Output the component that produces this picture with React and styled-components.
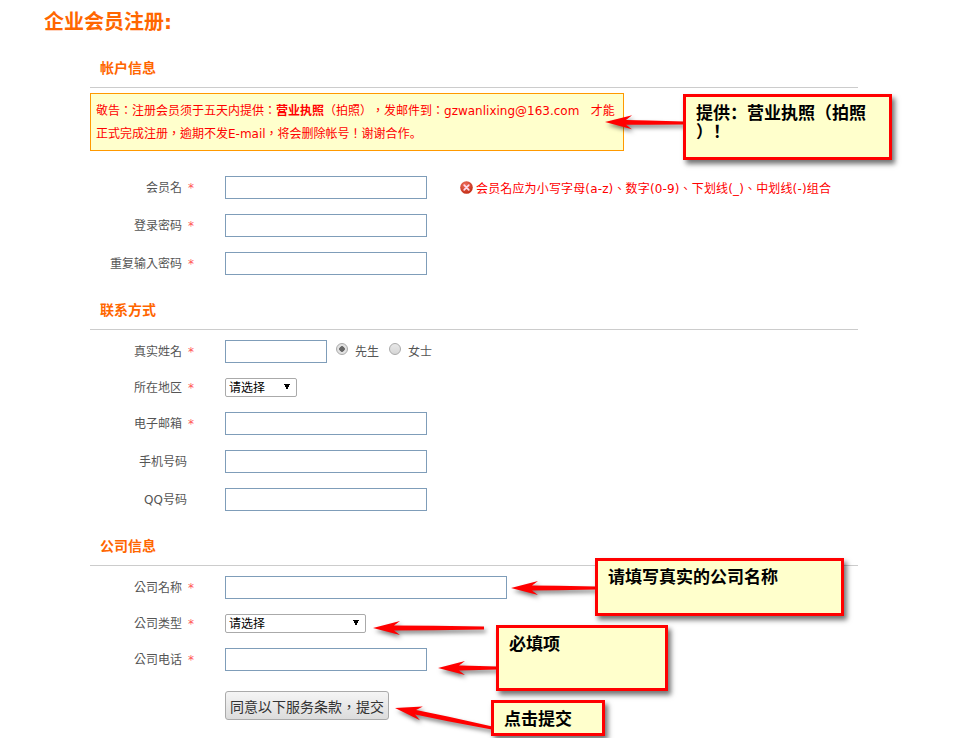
import React from "react";
import styled, { createGlobalStyle } from "styled-components";

const Global = createGlobalStyle`
  html, body { margin: 0; padding: 0; background: #fff; }
  body {
    font-family: "DejaVu Sans", "Noto Sans CJK TC", sans-serif;
    font-size: 12px;
    color: #555;
    text-spacing-trim: space-all;
  }
`;

const Page = styled.div`
  position: relative;
  width: 960px;
  height: 738px;
  overflow: hidden;
`;
const Title = styled.h1`
  margin: 0;
  padding-left: 44px;
  height: 44px;
  line-height: 44px;
  font-size: 20px;
  font-weight: 700;
  color: #f60;
  font-family: "DejaVu Sans", "Noto Sans CJK SC", sans-serif;
`;
const Form = styled.form`
  margin: 0 0 0 90px;
  width: 768px;
`;
const SectionHead = styled.h2`
  margin: ${(p) => (p.$first ? "5px" : "16px")} 0 0;
  height: 38px;
  line-height: 39px;
  padding-left: 10px;
  font-size: 14px;
  font-weight: 700;
  color: #f60;
  border-bottom: 1px solid #ccc;
  font-family: "Liberation Sans", "Noto Sans CJK SC", sans-serif;
`;
const Notice = styled.div`
  box-sizing: border-box;
  margin-top: 5px;
  width: 534px;
  height: 58px;
  padding: 6px 5px;
  border: 1px solid #f90;
  background: #ffc;
  color: #f00;
  line-height: 22px;
`;
const NoticeLine = styled.div`
  white-space: nowrap;
`;
const Strong = styled.b`
  font-family: "Liberation Sans", "Noto Sans CJK SC", sans-serif;
`;
const Stop = styled.span`
  font-family: "Noto Sans CJK SC", sans-serif;
`;
const Rows = styled.div`
  display: flex;
  flex-direction: column;
  gap: 15px;
  margin-top: ${(p) => p.$top}px;
`;
const Row = styled.div`
  display: flex;
  align-items: center;
`;
const Label = styled.label`
  box-sizing: border-box;
  flex: none;
  display: flex;
  justify-content: flex-end;
  width: 135px;
  padding-right: ${(p) => (p.$required ? 31 : 38)}px;
  line-height: 16px;
`;
const Star = styled.span`
  width: 12px;
  text-align: right;
  color: #f55;
`;
const TextInput = styled.input`
  box-sizing: border-box;
  width: ${(p) => p.$w}px;
  height: 23px;
  padding: 0 4px;
  border: 1px solid #7f9db9;
  background: #fff;
  outline: none;
`;
const Select = styled.select`
  appearance: none;
  box-sizing: border-box;
  width: ${(p) => p.$w}px;
  height: 19px;
  padding: 0 0 0 3px;
  border: 1px solid #aaa;
  border-radius: 2px;
  color: #000;
  font: 12px "DejaVu Sans", "Noto Sans CJK SC", sans-serif;
  background-color: #fff;
  background-image:
    linear-gradient(to top right, transparent 50%, #000 50%),
    linear-gradient(to top left, transparent 50%, #000 50%);
  background-size: 3px 6px, 3px 6px;
  background-position: right 9px top 5px, right 6px top 5px;
  background-repeat: no-repeat;
`;
const Radio = styled.input`
  appearance: none;
  box-sizing: border-box;
  flex: none;
  width: 12px;
  height: 12px;
  margin: 0 7px 5px ${(p) => p.$left}px;
  border: 1px solid #aaa;
  border-radius: 50%;
  background: ${(p) =>
    p.$on
      ? "radial-gradient(circle, #666 0 2.5px, #e2e2e2 3px)"
      : "linear-gradient(#e8e8e8, #d6d6d6)"};
`;
const RadioText = styled.span`
  line-height: 16px;
`;
const ErrorMsg = styled.div`
  display: flex;
  align-items: center;
  gap: 3px;
  margin-left: 33px;
  color: #f00;
  letter-spacing: 0.15px;
`;
const Submit = styled.button`
  box-sizing: border-box;
  width: 164px;
  height: 29px;
  margin: 5px 0 0 135px;
  padding: 0;
  border: 1px solid #aaa;
  border-radius: 3px;
  background: linear-gradient(#f5f5f5, #dcdcdc);
  color: #333;
  font: 14px "DejaVu Sans", "Noto Sans CJK TC", sans-serif;
`;
const Callout = styled.div`
  position: absolute;
  box-sizing: border-box;
  left: ${(p) => p.$x}px;
  top: ${(p) => p.$y}px;
  width: ${(p) => p.$w}px;
  height: ${(p) => p.$h}px;
  padding: 5px 10px;
  border: 3px solid #f00;
  background: #ffc;
  box-shadow: 3px 4px 5px rgba(0, 0, 0, 0.55);
  color: #000;
  font: 700 17px/19px "Noto Sans CJK SC", sans-serif;
  white-space: nowrap;
`;
const ArrowLayer = styled.svg`
  position: absolute;
  left: 0;
  top: 0;
  filter: drop-shadow(2px 3px 2px rgba(0, 0, 0, 0.5));
  pointer-events: none;
`;

function arrowPoints([tx, ty, ax, ay]) {
  const dx = ax - tx;
  const dy = ay - ty;
  const len = Math.hypot(dx, dy);
  const ux = dx / len;
  const uy = dy / len;
  const at = (along, side) =>
    `${(tx + ux * along - uy * side).toFixed(1)},${(ty + uy * along + ux * side).toFixed(1)}`;
  return [
    at(0, 0), at(27, -7), at(21, -2.4), at(len * 0.55, -2.2), at(len, -1.4),
    at(len, 1.4), at(len * 0.55, 2.2), at(21, 2.4), at(27, 7),
  ].join(" ");
}

const arrows = [
  [605, 122, 684, 123],
  [511, 588, 596, 588],
  [373, 628, 484, 628],
  [438, 668, 497, 668],
  [395, 708, 492, 728],
];

function ErrorIcon() {
  return (
    <svg width="13" height="13" viewBox="0 0 13 13">
      <defs>
        <radialGradient id="err" cx="40%" cy="30%" r="75%">
          <stop offset="0" stopColor="#ee7060" />
          <stop offset="1" stopColor="#c0280f" />
        </radialGradient>
      </defs>
      <circle cx="6.5" cy="6.5" r="6.3" fill="url(#err)" />
      <path d="M4.2 4.2l4.6 4.6M8.8 4.2l-4.6 4.6" stroke="#fde" strokeWidth="1.7" strokeLinecap="round" />
    </svg>
  );
}

function Field({ label, required, children }) {
  return (
    <Row>
      <Label $required={required}>
        {label}
        {required && <Star>*</Star>}
      </Label>
      {children}
    </Row>
  );
}

export default function App() {
  return (
    <Page>
      <Global />
      <Title>企业会员注册:</Title>
      <Form onSubmit={(e) => e.preventDefault()}>
        <SectionHead $first>帐户信息</SectionHead>
        <Notice>
          <NoticeLine>
            敬告：注册会员须于五天内提供：<Strong>营业执照</Strong>（拍照），发邮件到：gzwanlixing@163.com &nbsp;&nbsp;才能
          </NoticeLine>
          <NoticeLine>
            正式完成注册，逾期不发E-mail，将会删除帐号！谢谢合作<Stop>。</Stop>
          </NoticeLine>
        </Notice>
        <Rows $top={25}>
          <Field label="会员名" required>
            <TextInput $w={202} />
            <ErrorMsg>
              <ErrorIcon />
              会员名应为小写字母(a-z)、数字(0-9)、下划线(_)、中划线(-)组合
            </ErrorMsg>
          </Field>
          <Field label="登录密码" required>
            <TextInput $w={202} type="password" />
          </Field>
          <Field label="重复输入密码" required>
            <TextInput $w={202} type="password" />
          </Field>
        </Rows>

        <SectionHead>联系方式</SectionHead>
        <Rows $top={10}>
          <Field label="真实姓名" required>
            <TextInput $w={102} />
            <Radio type="radio" name="sex" $on $left={9} defaultChecked />
            <RadioText>先生</RadioText>
            <Radio type="radio" name="sex" $left={10} />
            <RadioText>女士</RadioText>
          </Field>
          <Field label="所在地区" required>
            <Select $w={72}>
              <option>请选择</option>
            </Select>
          </Field>
          <Field label="电子邮箱" required>
            <TextInput $w={202} />
          </Field>
          <Field label="手机号码">
            <TextInput $w={202} />
          </Field>
          <Field label="QQ号码">
            <TextInput $w={202} />
          </Field>
        </Rows>

        <SectionHead>公司信息</SectionHead>
        <Rows $top={10}>
          <Field label="公司名称" required>
            <TextInput $w={282} />
          </Field>
          <Field label="公司类型" required>
            <Select $w={141}>
              <option>请选择</option>
            </Select>
          </Field>
          <Field label="公司电话" required>
            <TextInput $w={202} />
          </Field>
          <Submit type="submit">同意以下服务条款，提交</Submit>
        </Rows>
      </Form>

      <ArrowLayer width="960" height="738" viewBox="0 0 960 738">
        {arrows.map((a) => (
          <polygon key={a.join()} points={arrowPoints(a)} fill="#f00" />
        ))}
      </ArrowLayer>
      <Callout $x={683} $y={94} $w={209} $h={66}>
        提供：营业执照（拍照
        <br />
        ）！
      </Callout>
      <Callout $x={595} $y={558} $w={249} $h={58}>请填写真实的公司名称</Callout>
      <Callout $x={496} $y={625} $w={172} $h={66}>必填项</Callout>
      <Callout $x={491} $y={700} $w={114} $h={36}>点击提交</Callout>
    </Page>
  );
}
